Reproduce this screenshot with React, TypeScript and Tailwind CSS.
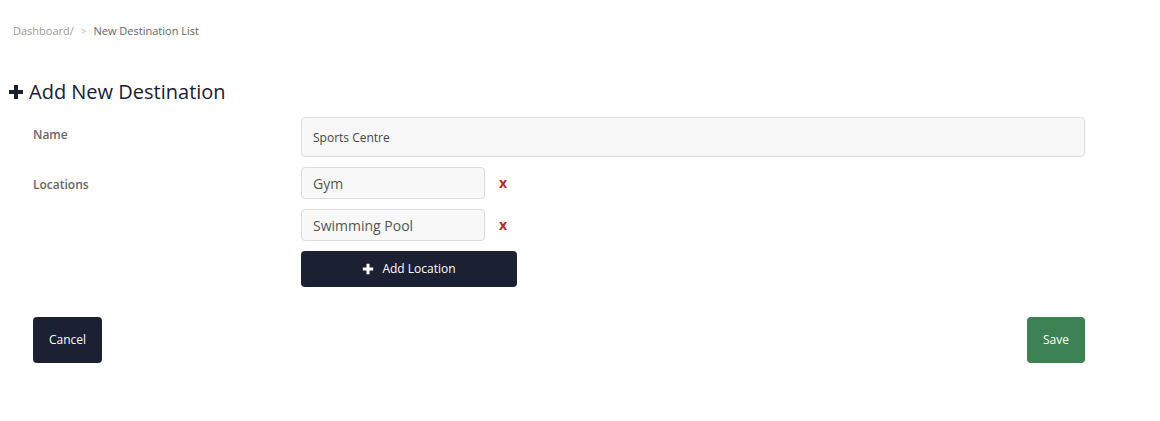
import { FunctionComponent, useState } from "react"

const PlusIcon: FunctionComponent<{ className?: string }> = ({ className }) => (
  <svg viewBox="0 0 16 16" className={className} fill="currentColor">
    <path d="M6 1h4v5h5v4h-5v5H6v-5H1V6h5z" />
  </svg>
)

const App: FunctionComponent = () => {
  const [name, setName] = useState("Sports Centre")
  const [locations, setLocations] = useState(["Gym", "Swimming Pool"])

  return (
    <div
      className="min-h-screen bg-white text-[#1a2033]"
      style={{ fontFamily: '"Open Sans", "Noto Sans", sans-serif' }}
    >
      {/* Breadcrumb */}
      <nav className="flex items-center px-[13px] pt-[22px] text-[11px] leading-[18px]">
        <span className="text-[#9a9a9a]">Dashboard/</span>
        <span className="mx-[7px] text-[10px] text-[#bdbdbd]">&gt;</span>
        <span className="text-[#666]">New Destination List</span>
      </nav>

      <div className="px-[9px] pt-[40px]">
        <h1 className="flex items-center text-[20px] leading-[24px]">
          <PlusIcon className="mr-[5px] h-[16px] w-[16px] -ml-[1px]" />
          Add New Destination
        </h1>

        <form className="pl-[24px] pr-[66px] pt-[13px]">
          {/* Name */}
          <div className="flex">
            <label className="w-[268px] shrink-0 pt-[9px] text-[12px] font-semibold leading-[18px] text-[#666]">
              Name
            </label>
            <input
              value={name}
              onChange={(e) => setName(e.target.value)}
              className="h-[40px] flex-1 rounded-[4px] border border-[#dcdcdc] bg-[#f8f8f8] px-[11px] text-[12px] text-[#444] outline-none"
            />
          </div>

          {/* Locations */}
          <div className="mt-[10px] flex">
            <label className="w-[268px] shrink-0 pt-[9px] text-[12px] font-semibold leading-[18px] text-[#666]">
              Locations
            </label>
            <div className="flex flex-col gap-[10px]">
              {locations.map((loc, i) => (
                <div key={i} className="flex items-center">
                  <input
                    value={loc}
                    onChange={(e) =>
                      setLocations((prev) =>
                        prev.map((l, j) => (j === i ? e.target.value : l))
                      )
                    }
                    className="h-[32px] w-[184px] rounded-[4px] border border-[#dcdcdc] bg-[#f8f8f8] px-[11px] text-[14px] text-[#555] outline-none"
                  />
                  <button
                    type="button"
                    onClick={() => setLocations((prev) => prev.filter((_, j) => j !== i))}
                    className="ml-[14px] text-[14px] font-bold leading-none text-[#c0282d]"
                  >
                    x
                  </button>
                </div>
              ))}
              <button
                type="button"
                onClick={() => setLocations((prev) => [...prev, ""])}
                className="flex h-[36px] w-[216px] items-center justify-center rounded-[4px] bg-[#1b2133] text-[12px] text-white"
              >
                <PlusIcon className="mr-[8px] h-[12px] w-[12px]" />
                Add Location
              </button>
            </div>
          </div>

          {/* Actions */}
          <div className="mt-[30px] flex justify-between">
            <button
              type="button"
              className="h-[46px] w-[69px] rounded-[4px] bg-[#1b2133] text-[12px] text-white"
            >
              Cancel
            </button>
            <button
              type="submit"
              className="h-[46px] w-[58px] rounded-[4px] bg-[#3d8254] text-[12px] text-white"
            >
              Save
            </button>
          </div>
        </form>
      </div>
    </div>
  )
}

export default App
